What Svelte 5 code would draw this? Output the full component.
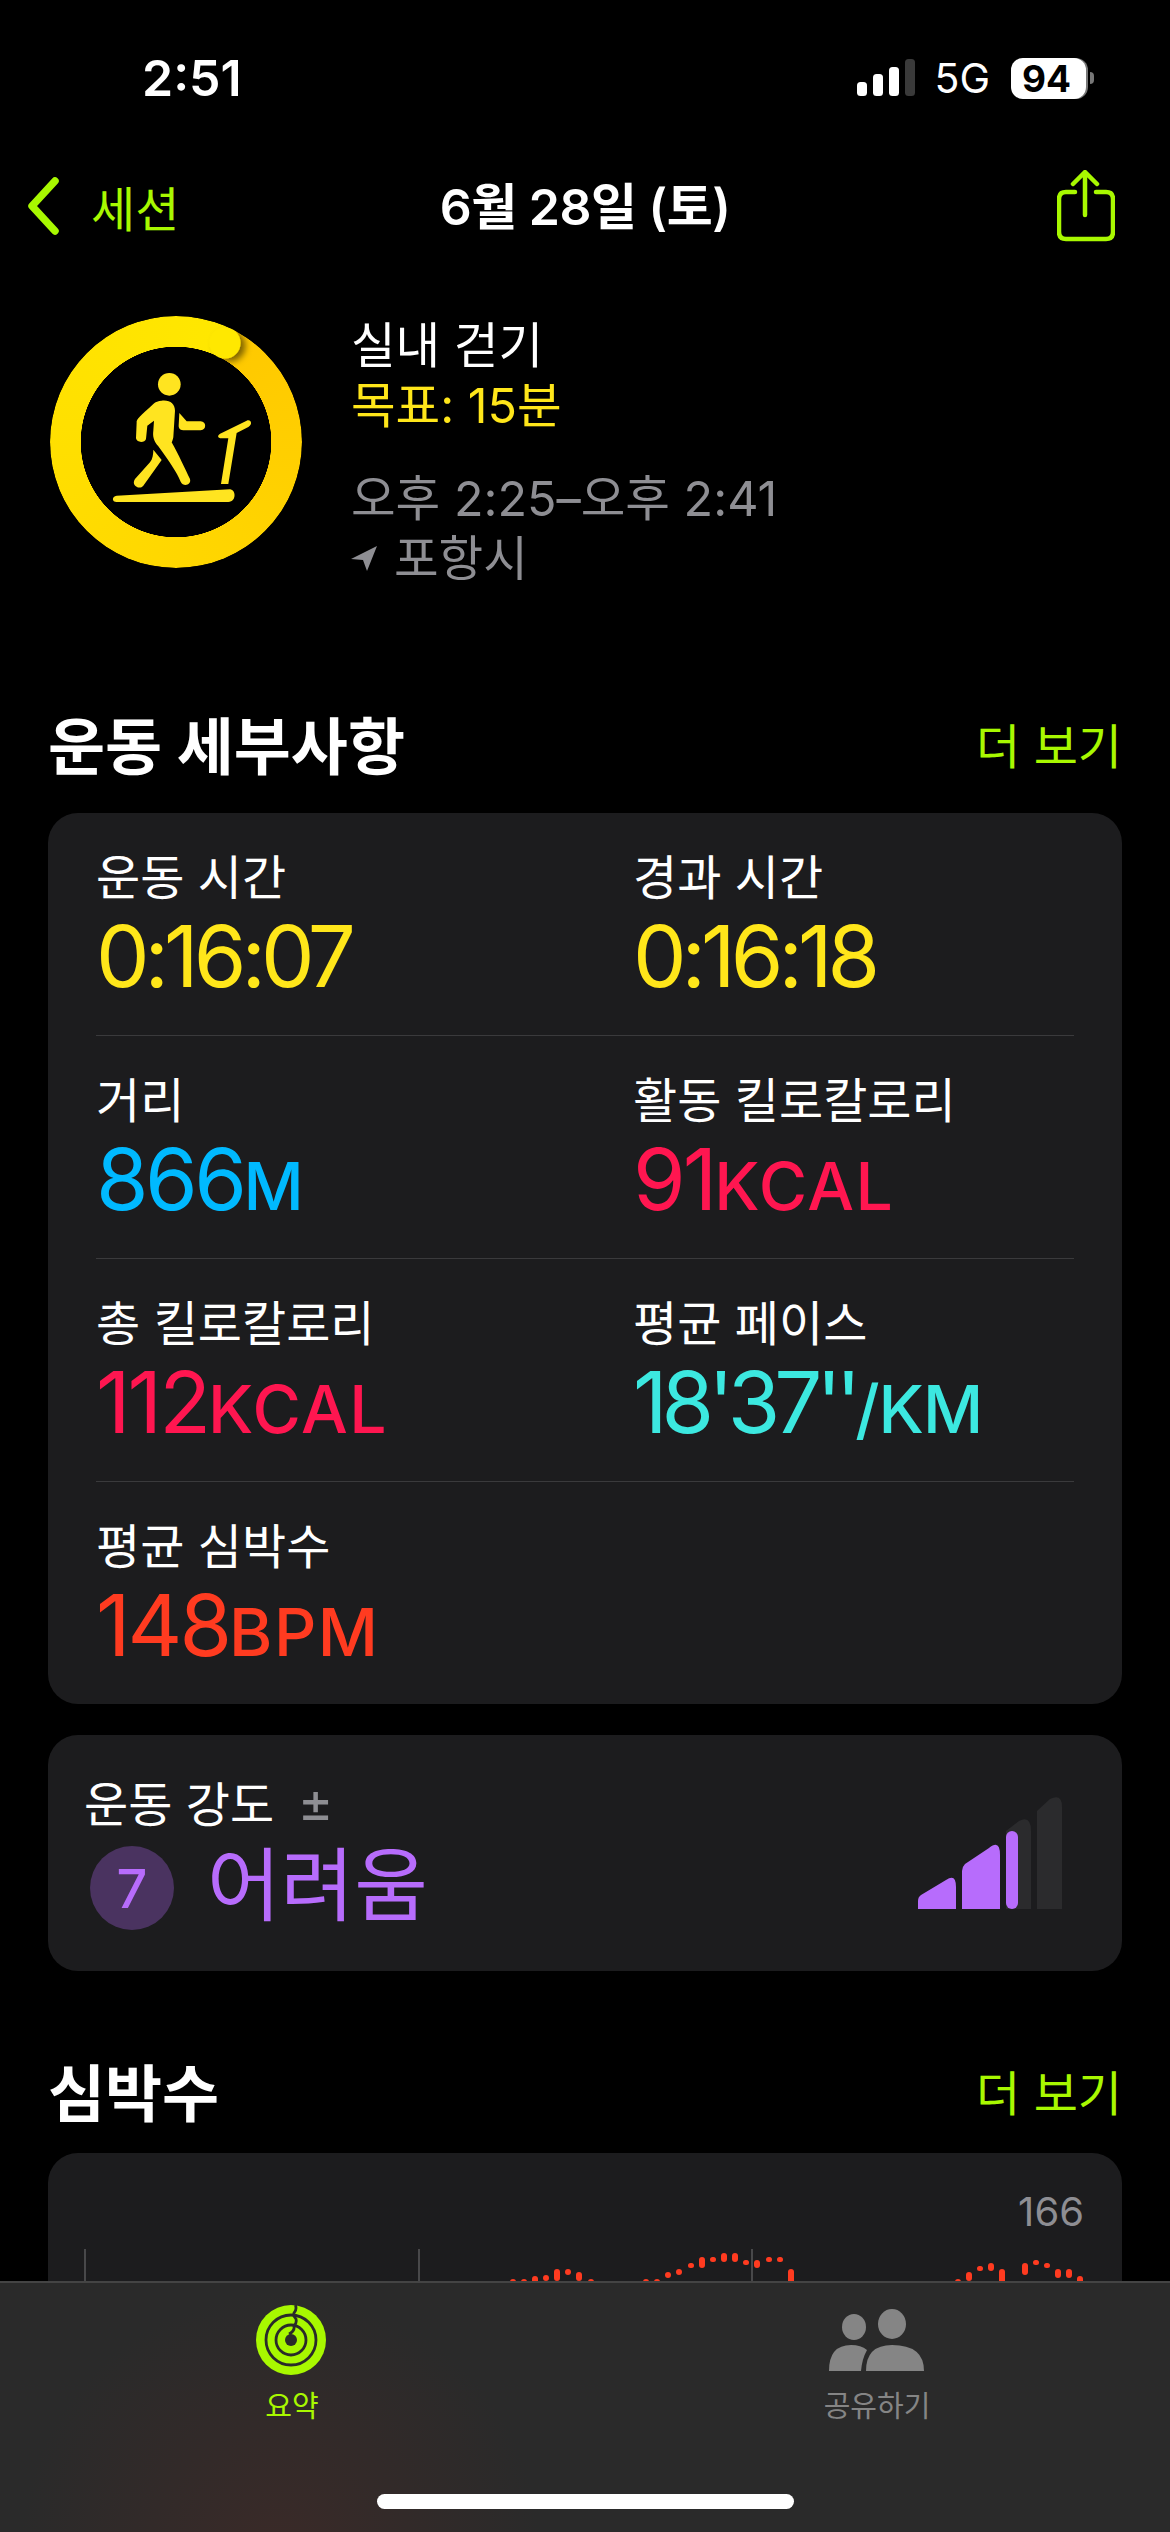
<script>
  const rows = [
    [{ l: '운동 시간', v: '0:16:07', c: 'yellow' }, { l: '경과 시간', v: '0:16:18', c: 'yellow' }],
    [{ l: '거리', v: '866', u: 'M', c: 'blue' }, { l: '활동 킬로칼로리', v: '91', u: 'KCAL', c: 'pink' }],
    [{ l: '총 킬로칼로리', v: '112', u: 'KCAL', c: 'pink' }, { l: '평균 페이스', v: "18'37''", u: '/KM', c: 'cyan' }],
    [{ l: '평균 심박수', v: '148', u: 'BPM', c: 'red' }]
  ];
  // x centre, top, bottom of each heart-rate sample
  const dots = [
    [512.5,2279,2290],[523.5,2279,2290],[535,2276,2290],[545.5,2275,2281],[557,2269,2281],[568,2269,2275],[579,2272,2281],[590.5,2279,2290],
    [645.6,2279,2290],[657,2279,2290],[668,2272,2278],[679,2269,2275],[690.6,2263,2268],[701.6,2257,2268],[712.7,2257,2262],[724,2253,2262],[735,2253,2262],[746,2260,2265],[757,2260,2268],[768.7,2257,2262],[779.7,2257,2262],[790.7,2269,2290],
    [958,2279,2290],[969,2272,2281],[980,2266,2271],[991,2263,2271],[1002.4,2269,2290],[1025,2263,2275],[1036,2260,2265],[1047,2263,2268],[1058,2269,2278],[1069,2269,2278],[1080,2276,2290]
  ];
</script>

<div class="phone">
  <div class="status">
    <span class="time">2:51</span>
    <div class="status-right">
      <svg class="signal" width="58" height="38" viewBox="0 0 58 38" aria-hidden="true">
        <rect x="0" y="23" width="10" height="14" rx="3.5" fill="#fff" />
        <rect x="16" y="15" width="10" height="22" rx="3.5" fill="#fff" />
        <rect x="32" y="8" width="10" height="29" rx="3.5" fill="#fff" />
        <rect x="48" y="0" width="10" height="37" rx="3.5" fill="#3a3a3a" />
      </svg>
      <span class="net">5G</span>
      <div class="battery"><span>94</span></div>
      <i class="nub"></i>
    </div>
  </div>

  <header class="nav">
    <div class="back">
      <svg width="34" height="58" viewBox="0 0 34 58" aria-hidden="true">
        <path d="M29 4 L6 29 L29 54" fill="none" stroke="#a8f800" stroke-width="7.5" stroke-linecap="round" stroke-linejoin="round" />
      </svg>
      <span>세션</span>
    </div>
    <h1>6월 28일 (토)</h1>
    <svg class="share" width="58" height="72" viewBox="0 0 58 72" aria-hidden="true">
      <path d="M28 45 V3 M16 14 L28 2 L40 14" fill="none" stroke="#a8f800" stroke-width="4.5" stroke-linecap="round" stroke-linejoin="round" />
      <path d="M18 22 H9 Q2 22 2 29 V62 Q2 69 9 69 H49 Q56 69 56 62 V29 Q56 22 49 22 H39" fill="none" stroke="#a8f800" stroke-width="4.5" stroke-linecap="round" />
    </svg>
  </header>

  <section class="summary">
    <div class="ring">
      <div class="ring-band"></div>
      <svg width="252" height="252" viewBox="0 0 252 252" aria-hidden="true">
        <defs>
          <filter id="sh" x="-50%" y="-50%" width="200%" height="200%">
            <feDropShadow dx="5" dy="3" stdDeviation="3" flood-color="#000" flood-opacity="0.5" />
          </filter>
        </defs>
        <circle cx="175" cy="27" r="15.5" fill="#ffe800" filter="url(#sh)" />
        <g fill="#ffe420" transform="translate(40 43) scale(0.3333)">
          <circle cx="238" cy="76" r="34" />
          <path d="M215 125 C240 122 255 135 255 155 L250 235 C248 245 246 248 245 250 C265 285 285 330 300 360 C305 378 280 385 272 368 C260 340 240 310 205 262 C190 245 188 230 190 215 L192 185 L172 200 L168 240 C165 252 140 252 138 238 L140 190 C140 180 150 172 190 135 C197 128 205 126 215 125 Z" />
          <path d="M268 162 L290 187 L332 187 C350 187 350 214 332 214 L285 214 C270 214 266 208 266 200 Z" />
          <path d="M190 272 L215 303 L160 380 C148 395 122 378 135 360 L180 310 C188 300 190 285 190 272 Z" />
          <path d="M395 222 L470 185 C485 180 488 198 475 204 L440 222 L415 375 L393 375 L415 238 L395 238 C382 238 380 228 395 222 Z" />
          <path d="M80 410 L420 391 C438 392 440 428 415 429 L80 429 C65 429 65 412 80 410 Z" />
        </g>
      </svg>
    </div>
    <div class="summary-text">
      <div class="kind">실내 걷기</div>
      <div class="goal">목표: 15분</div>
      <div class="when">오후 2:25–오후 2:41</div>
      <div class="where">
        <svg width="26" height="26" viewBox="0 0 26 26" aria-hidden="true"><path d="M26 0 L16 25 L12 14 L0 13 Z" fill="#8e8e93" /></svg>
        <span>포항시</span>
      </div>
    </div>
  </section>

  <div class="section-head details-head">
    <h2>운동 세부사항</h2>
    <span class="more">더 보기</span>
  </div>

  <section class="card metrics">
    {#each rows as row}
      <div class="row">
        {#each row as m}
          <div class="metric">
            <div class="label">{m.l}</div>
            <div class="value {m.c}">{m.v}{#if m.u}<small>{m.u}</small>{/if}</div>
          </div>
        {/each}
      </div>
    {/each}
  </section>

  <section class="card effort">
    <div class="effort-left">
      <div class="effort-label">운동 강도 <span class="pm">±</span></div>
      <div class="effort-value">
        <span class="badge">7</span>
        <span class="hard">어려움</span>
      </div>
    </div>
    <svg class="bars" width="144" height="114" viewBox="0 0 144 114" aria-hidden="true">
      <path d="M88 34 L101 24 Q113 18 113 34 V112 H88 Z" fill="#2b2b2d" />
      <path d="M119 14 L132 2 Q144 -4 144 10 V112 H119 Z" fill="#2b2b2d" />
      <path d="M0 112 V104 Q0 100 3 98 L28 83 Q38 76 38 90 V112 Z" fill="#b76cfc" />
      <path d="M44 112 V74 Q44 70 47 67 L71 51 Q82 42 82 58 V112 Z" fill="#b76cfc" />
      <rect x="88" y="34" width="12" height="78" rx="6" fill="#b76cfc" />
    </svg>
  </section>

  <div class="section-head hr-head">
    <h2>심박수</h2>
    <span class="more">더 보기</span>
  </div>

  <section class="card chart">
    <div class="max">166</div>
    <div class="plot">
      <i class="grid g1"></i><i class="grid g2"></i><i class="grid g3"></i>
      {#each dots as d}
        <i class="dot" style="left:{d[0] - 48 - 3}px;top:{d[1] - 2249}px;height:{d[2] - d[1]}px"></i>
      {/each}
    </div>
  </section>

  <nav class="tabbar">
    <div class="tab active">
      <svg width="72" height="70" viewBox="0 0 72 70" aria-hidden="true">
        <circle cx="35" cy="35" r="35" fill="#a8f800" />
        <circle cx="35" cy="35" r="25" fill="none" stroke="#2a2a2a" stroke-width="2.8" />
        <circle cx="35" cy="35" r="15" fill="none" stroke="#2a2a2a" stroke-width="2.8" />
        <circle cx="35" cy="35" r="6" fill="#2a2a2a" />
        <path d="M39.5 0 Q41 5 38 8 Q37 11 40 14 Q41 18 38 21 Q39 26 33 29" fill="none" stroke="#2a2a2a" stroke-width="2.8" />
      </svg>
      <span>요약</span>
    </div>
    <div class="tab">
      <svg width="96" height="64" viewBox="0 0 96 64" aria-hidden="true">
        <ellipse cx="25" cy="18" rx="12" ry="13" fill="#858585" />
        <ellipse cx="63" cy="15" rx="14" ry="15" fill="#858585" />
        <path d="M0 62 Q0 36 22 36 Q32 36 38 41 Q33 50 32 62 Z" fill="#858585" />
        <path d="M37 62 Q37 36 63 36 Q95 36 95 62 Z" fill="#858585" />
      </svg>
      <span>공유하기</span>
    </div>
    <i class="home"></i>
  </nav>
</div>

<style>
  :global(body) { margin: 0; background: #000; }
  .phone {
    position: relative;
    width: 1170px;
    height: 2532px;
    overflow: hidden;
    background: #000;
    color: #fff;
    font-family: Inter, "Noto Sans CJK KR", sans-serif;
  }
  .status {
    height: 156px;
    box-sizing: border-box;
    padding: 48px 76px 0 142px;
    display: flex;
    justify-content: space-between;
    align-items: flex-start;
  }
  .time { font-size: 50px; font-weight: 600; line-height: 60px; }
  .status-right { display: flex; align-items: center; height: 60px; }
  .signal { margin-right: 19px; }
  .net { font-size: 41px; line-height: 60px; margin-right: 21px; }
  .battery {
    width: 75px; height: 41px; border-radius: 12px; background: #fff;
    display: flex; align-items: center; justify-content: center;
    box-shadow: 2px 0 0 #777;
  }
  .battery span { color: #000; font-size: 37px; font-weight: 700; margin-right: 4px; }
  .nub { width: 4px; height: 12px; margin-left: 4px; background: #777; border-radius: 0 6px 6px 0; }
  .nav { position: relative; display: flex; align-items: center; justify-content: space-between; height: 100px; padding: 0 55px 0 26px; }
  .back { display: flex; align-items: center; gap: 31px; color: #a8f800; font-size: 48px; }
  .back span { font-weight: 400; }
  .nav h1 { position: absolute; left: 0; right: 0; top: 26px; margin: 0; text-align: center; font-size: 50px; line-height: 50px; font-weight: 600; letter-spacing: -0.5px; }
  .summary { display: flex; gap: 49px; padding: 60px 0 0 50px; height: 280px; }
  .ring { position: relative; width: 252px; height: 252px; flex: none; }
  .ring-band {
    position: absolute; inset: 0; border-radius: 50%;
    background: conic-gradient(from 26deg, #ffc800 0deg, #ffd400 120deg, #ffdf00 240deg, #ffe800 360deg);
    -webkit-mask: radial-gradient(circle closest-side, transparent 95px, #000 95.5px);
    mask: radial-gradient(circle closest-side, transparent 95px, #000 95.5px);
  }
  .ring svg { position: absolute; inset: 0; }
  .kind, .goal, .when, .where { font-size: 48.5px; line-height: 60px; font-weight: 400; }
  .goal { color: #ffe61a; }
  .when { color: #8e8e93; margin-top: 33px; }
  .where { color: #8e8e93; display: flex; align-items: center; gap: 17px; }
  .section-head { display: flex; justify-content: space-between; align-items: center; padding: 0 48px; height: 80px; }
  .details-head { margin-top: 107px; }
  .hr-head { margin-top: 79px; }
  h2 { margin: 0; font-size: 62px; font-weight: 700; }
  .more { color: #a8f800; font-size: 48px; }
  .card { margin: 0 48px; background: #1c1c1e; border-radius: 30px; }
  .metrics { margin-top: 30px; padding: 0 48px; height: 891px; box-sizing: border-box; display: flex; flex-direction: column; }
  .row { display: grid; grid-template-columns: 537px 1fr; height: 223px; flex: none; box-sizing: border-box; padding-top: 33px; border-bottom: 1.5px solid #3a3a3c; }
  .row:last-child { border-bottom: 0; }
  .label { font-size: 48px; line-height: 64px; }
  .value { font-size: 85px; line-height: 100px; font-weight: 430; letter-spacing: -3px; margin-top: -3px; }
  .value small { font-size: 66px; font-weight: 480; letter-spacing: 1.5px; }
  .yellow { color: #ffe61a; letter-spacing: -5px; }
  .blue { color: #00b9ff; letter-spacing: -3.5px; }
  .pink { color: #ff1650; }
  .cyan { color: #3ce8e0; letter-spacing: -6px; }
  .cyan small { letter-spacing: -1px; }
  .red { color: #ff3b20; }
  .effort { margin-top: 31px; height: 236px; display: flex; justify-content: space-between; padding: 0 60px 0 36px; position: relative; }
  .effort-label { font-size: 48px; line-height: 60px; margin-top: 38px; }
  .pm { color: #8e8e93; margin-left: 10px; font-size: 54px; font-weight: 400; }
  .effort-value { display: flex; align-items: center; gap: 33px; margin-left: 6px; margin-top: 0; }
  .badge { width: 84px; height: 84px; border-radius: 50%; background: #4a3360; color: #b76cfc; display: flex; align-items: center; justify-content: center; font-size: 54px; font-weight: 500; }
  .hard { color: #b76cfc; font-size: 80px; line-height: 100px; margin-bottom: 6px; }
  .bars { margin-top: 62px; }
  .chart { margin-top: 23px; height: 500px; position: relative; }
  .max { position: absolute; right: 38px; top: 34px; color: #8e8e93; font-size: 40px; line-height: 50px; }
  .plot { position: absolute; left: 0; right: 0; top: 96px; height: 200px; }
  .grid { position: absolute; top: 0; height: 200px; width: 1.5px; background: #48484a; }
  .g1 { left: 36px; }
  .g2 { left: 370px; }
  .g3 { left: 703px; }
  .dot { position: absolute; width: 6px; background: #ff3b20; border-radius: 3px; }
  .tabbar {
    position: absolute; left: 0; right: 0; top: 2281px; bottom: 0;
    display: grid; grid-template-columns: 584px 586px;
    background: radial-gradient(circle at 280px 270px, #3a2a28 0, #2a2a2a 260px), #2a2a2a;
    border-top: 2px solid #444;
  }
  .tab { display: flex; flex-direction: column; align-items: center; padding-top: 22px; color: #858585; font-size: 29px; }
  .tab span { margin-top: 10px; line-height: 44px; }
  .tab.active { color: #a8f800; }
  .tab:last-of-type svg { margin-top: 4px; margin-bottom: 2px; }
  .home { position: absolute; left: 377px; top: 211px; width: 417px; height: 15px; border-radius: 8px; background: #fff; }
</style>
